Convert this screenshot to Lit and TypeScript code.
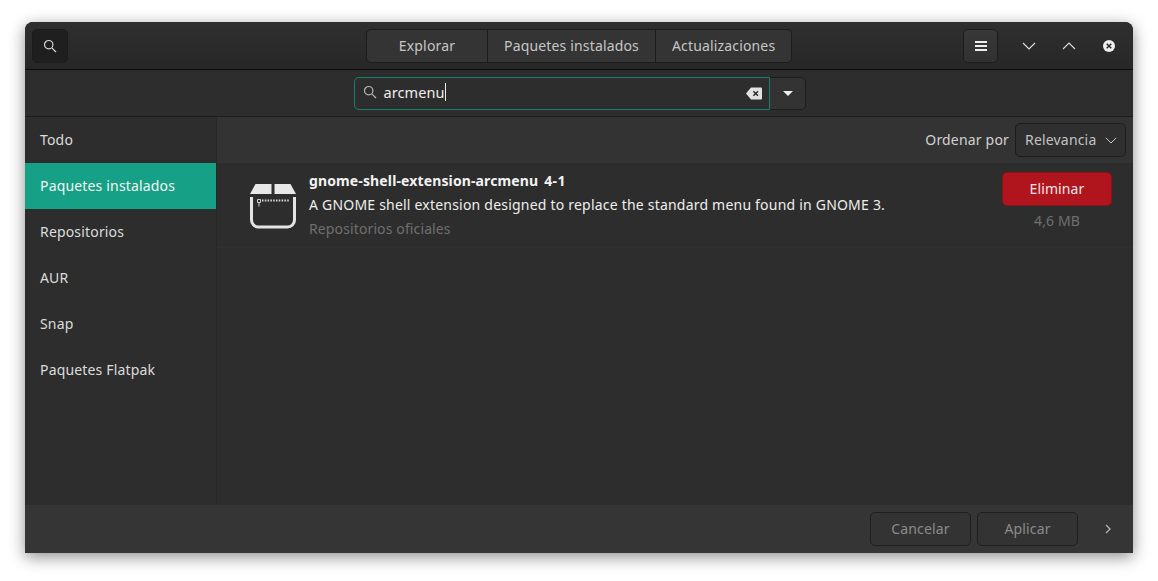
import { LitElement, html, css, svg } from "lit";
import { customElement } from "lit/decorators.js";

const searchIcon = (c: string) => svg`<svg class="ic" width="14" height="14" viewBox="0 0 14 14" fill="none" stroke="${c}" stroke-width="1.2"><circle cx="5.7" cy="5.7" r="4.2"/><path d="M8.8 8.8l4.2 4.2"/></svg>`;

@customElement("app-root")
export class AppRoot extends LitElement {
  static styles = css`
    :host { display: block; width: 1158px; height: 581px; background: #fff; overflow: hidden; font-family: "Noto Sans", sans-serif; font-size: 14px; color: #eeeeec; }
    * { box-sizing: border-box; }
    .page { padding: 22px 25px 28px; height: 581px; }
    .win { height: 531px; display: flex; flex-direction: column; background: #2d2d2d; border-radius: 8px 8px 0 0; box-shadow: 0 4px 16px rgba(0,0,0,.45); overflow: hidden; }
    .head { height: 48px; flex: none; display: flex; align-items: center; padding: 0 7px; background: linear-gradient(#2f2f2f, #272727); border-bottom: 1px solid #0c0c0c; position: relative; }
    .iconbtn { width: 36px; height: 34px; border-radius: 5px; border: 1px solid #1c1c1c; display: flex; align-items: center; justify-content: center; background: #1f1f1f; }
    .tabs { position: absolute; left: 341px; top: 7px; display: flex; height: 34px; border: 1px solid #1c1c1c; border-radius: 5px; background: #343434; color: #c6c6c6; }
    .tab { display: flex; align-items: center; justify-content: center; border-left: 1px solid #1c1c1c; padding: 0 16px 2px; letter-spacing: .16px; }
    .tab:first-child { border-left: 0; width: 120px; }
    .right { margin-left: auto; display: flex; align-items: center; }
    .menu { width: 35px; background: linear-gradient(#383838, #313131); margin-right: 11px; margin-left: 0; }
    .wc { width: 40px; display: flex; justify-content: center; align-items: center; }
    .wc:last-child { width: 40px; margin-right: -3px; }
    .searchbar { height: 47px; flex: none; display: flex; justify-content: center; align-items: center; background: #2d2d2d; border-bottom: 1px solid #1b1b1b; }
    .sgroup { display: flex; height: 33px; width: 452px; margin-left: 1px; }
    .entry { width: 416px; border: 1px solid #15816a; border-radius: 5px 0 0 5px; background: #2d2d2d; display: flex; align-items: center; padding: 0 7px 2px 8px; color: #eeeeec; font-size: 14.5px; }
    .entry .txt { margin-left: 7px; display: flex; align-items: center; letter-spacing: .1px; }
    .caret { width: 1px; height: 18px; background: #eee; display: block; }
    .entry svg.clear { margin-left: auto; margin-top: 2px; }
    .drop { flex: 1; border: 1px solid #1c1c1c; border-left: 0; border-radius: 0 5px 5px 0; background: #333; display: flex; align-items: center; justify-content: center; padding-left: 1px; }
    .body { flex: 1; display: flex; min-height: 0; }
    .side { width: 192px; flex: none; background: #2d2d2d; border-right: 1px solid #282828; display: flex; flex-direction: column; color: #dcdcdc; }
    .side div { width: 191px; height: 46px; display: flex; align-items: center; padding: 0 0 2px 15px; letter-spacing: .17px; }
    .side .sel { background: #16a085; color: #f4f4f4; }
    .main { flex: 1; display: flex; flex-direction: column; min-width: 0; }
    .sort { height: 46px; flex: none; background: #333333; display: flex; align-items: center; justify-content: flex-end; padding: 0 7px 0 0; gap: 6px; color: #d2d2d2; letter-spacing: .18px; }
    .sort > span { margin-top: -2px; }
    .combo { width: 111px; height: 34px; border: 1px solid #1c1c1c; border-radius: 5px; background: #2f2f2f; display: flex; align-items: center; padding: 0 8px 0 9px; color: #c2c2c2; justify-content: space-between; }
    .combo span { margin-top: -2px; }
    .row { height: 85px; flex: none; display: flex; align-items: flex-start; border-bottom: 1px solid #303030; }
    .pkg { width: 48px; height: 48px; margin: 19px 0 0 32px; flex: none; }
    .info { margin-left: 12px; padding-top: 6px; display: flex; flex-direction: column; line-height: 24px; }
    .name { font-weight: 700; color: #f2f2f2; display: flex; gap: 6px; letter-spacing: .13px; }
    .name span + span { letter-spacing: .3px; }
    .desc { color: #eeeeec; letter-spacing: .21px; }
    .repo { color: #6f6f6f; letter-spacing: .12px; }
    .act { margin-left: auto; margin-right: 21px; padding-top: 9px; display: flex; flex-direction: column; align-items: center; gap: 5px; width: 110px; }
    .rm { width: 110px; height: 34px; border-radius: 5px; background: #b0141c; border: 1px solid #8d1118; display: flex; align-items: center; justify-content: center; color: #f1e7e7; letter-spacing: .1px; padding-bottom: 1px; }
    .size { color: #6f6f6f; letter-spacing: .1px; }
    .foot { height: 48px; flex: none; background: #353535; display: flex; align-items: center; justify-content: flex-end; gap: 6px; padding-right: 55px; position: relative; color: #8b8b8b; }
    .fb { width: 101px; height: 34px; border: 1px solid #1f1f1f; border-radius: 5px; background: #333; display: flex; align-items: center; justify-content: center; letter-spacing: .15px; padding-bottom: 2px; }
    .next { position: absolute; right: 22px; top: 19px; display: flex; }
    svg { display: block; flex: none; }
  `;

  render() {
    return html`<div class="page"><div class="win">
      <div class="head">
        <div class="iconbtn">${searchIcon("#d6d6d6")}</div>
        <div class="tabs">
          <div class="tab">Explorar</div><div class="tab">Paquetes instalados</div><div class="tab">Actualizaciones</div>
        </div>
        <div class="right">
          <div class="iconbtn menu"><svg width="14" height="12" viewBox="0 0 14 12" fill="#eee"><rect x="1" y="1" width="12" height="2"/><rect x="1" y="5" width="12" height="2"/><rect x="1" y="9" width="12" height="2"/></svg></div>
          <div class="wc"><svg width="14" height="8" viewBox="0 0 14 8" fill="none" stroke="#ddd" stroke-width="1.1"><path d="M1 1l6 6 6-6"/></svg></div>
          <div class="wc"><svg width="14" height="8" viewBox="0 0 14 8" fill="none" stroke="#ddd" stroke-width="1.1"><path d="M1 7l6-6 6 6"/></svg></div>
          <div class="wc"><svg width="14" height="14" viewBox="0 0 14 14"><circle cx="7" cy="7" r="6" fill="#eee"/><path d="M4.7 4.7l4.6 4.6M9.3 4.7l-4.6 4.6" stroke="#2b2b2b" stroke-width="1.5"/></svg></div>
        </div>
      </div>
      <div class="searchbar">
        <div class="sgroup">
          <div class="entry">${searchIcon("#b5b5b5")}<span class="txt">arcmenu<span class="caret"></span></span>
            <svg class="clear" width="16" height="13" viewBox="0 0 16 13"><path d="M5 .5h10a1 1 0 0 1 1 1v10a1 1 0 0 1-1 1H5L0 6.5z" fill="#e2e2e2"/><path d="M7.4 4.2l4.6 4.6M12 4.2L7.4 8.8" stroke="#2d2d2d" stroke-width="1.5"/></svg>
          </div>
          <div class="drop"><svg width="10" height="5" viewBox="0 0 10 5" fill="#eee"><path d="M0 0h10L5 5z"/></svg></div>
        </div>
      </div>
      <div class="body">
        <div class="side">
          <div>Todo</div><div class="sel">Paquetes instalados</div><div>Repositorios</div><div>AUR</div><div>Snap</div><div>Paquetes Flatpak</div>
        </div>
        <div class="main">
          <div class="sort">
            <span>Ordenar por</span>
            <div class="combo"><span>Relevancia</span><svg width="12" height="7" viewBox="0 0 12 7" fill="none" stroke="#c8c8c8" stroke-width="1"><path d="M.8.8L6 6l5.2-5.2"/></svg></div>
          </div>
          <div class="row">
            <svg class="pkg" viewBox="0 0 48 48">
              <path d="M6.5 2h16V12H1z" fill="#e8e8e8"/><path d="M25.5 2h16L47 12H25.5z" fill="#e8e8e8"/>
              <path d="M2.5 15V38a7 7 0 0 0 7 7h29a7 7 0 0 0 7-7V15" fill="none" stroke="#e4e4e4" stroke-width="3"/>
              <path d="M8.5 17.5h3v3h-3zM10 20.5v4" stroke="#cfcfcf" stroke-width="1" fill="none"/>
              <path d="M13 18.5h28" stroke="#dcdcdc" stroke-width="2" stroke-dasharray="1.5 1.3" fill="none"/>
            </svg>
            <div class="info">
              <div class="name"><span>gnome-shell-extension-arcmenu</span><span>4-1</span></div>
              <div class="desc">A GNOME shell extension designed to replace the standard menu found in GNOME 3.</div>
              <div class="repo">Repositorios oficiales</div>
            </div>
            <div class="act"><div class="rm">Eliminar</div><div class="size">4,6 MB</div></div>
          </div>
        </div>
      </div>
      <div class="foot">
        <div class="fb">Cancelar</div><div class="fb">Aplicar</div>
        <div class="next"><svg width="6" height="10" viewBox="0 0 6 10" fill="none" stroke="#b5b5b5" stroke-width="1.3"><path d="M1 1l4 4-4 4"/></svg></div>
      </div>
    </div></div>`;
  }
}
